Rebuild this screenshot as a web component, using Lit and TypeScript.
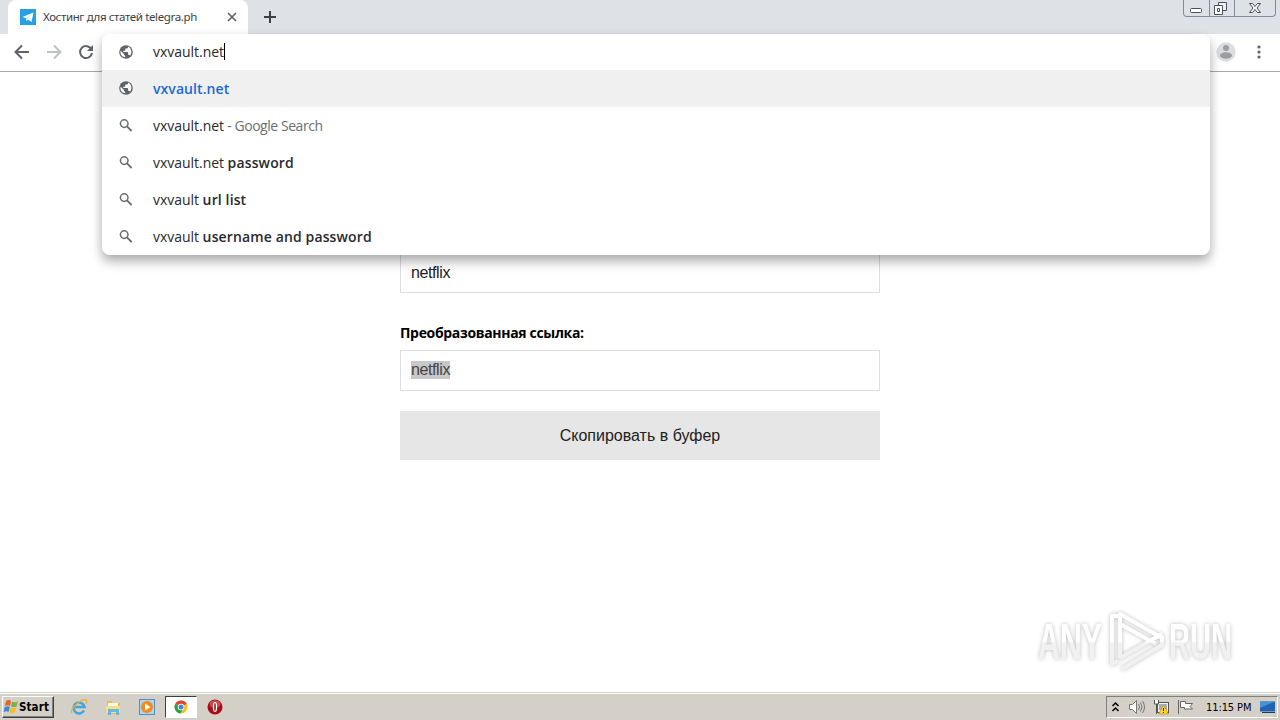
import { LitElement, html, css, svg } from 'lit';
import { customElement, property } from 'lit/decorators.js';

const SUGGESTIONS = [
  { typed: 'vxvault.net', note: ' - Google Search' },
  { typed: 'vxvault.net ', bold: 'password' },
  { typed: 'vxvault ', bold: 'url list' },
  { typed: 'vxvault ', bold: 'username and password' },
];

const globe = svg`
  <circle cx="8" cy="8" r="6.8" fill="#5f6368" />
  <path d="M7.2 13.3V12l-1.4-1.4v-.8L2.6 6.7c-.8 3.2 1.2 6.2 4.6 6.6z" fill="#fff" />
  <path d="M10 2.6v.6c0 .9-.6 1.4-1.4 1.4H7.3V6c0 .5-.4.8-.8.8H5.3v1.3h4c.5 0 .8.3.8.7v2h.7c.6 0 1.1.4 1.3.9 2.3-2.6 1.6-7.3-2.1-9.1z" fill="#fff" />
`;

const search = svg`
  <circle cx="6.2" cy="5.6" r="3.8" fill="none" stroke="#6a6e73" stroke-width="1.5" />
  <path d="M9 8.400L13.600 13" stroke="#6a6e73" stroke-width="1.8" />
`;

@customElement('app-root')
export class AppRoot extends LitElement {
  static styles = css`
    :host {
      display: flex;
      flex-direction: column;
      position: relative;
      width: 1280px;
      height: 720px;
      overflow: hidden;
      background: #fff;
      font-family: 'Open Sans', sans-serif;
    }
    browser-tabs {
      flex: 0 0 34px;
    }
    .toolbar {
      box-sizing: border-box;
      flex: 0 0 38px;
      display: flex;
      align-items: center;
      padding: 0 12px 2px 14px;
      border-bottom: 1px solid #a9a9a9;
    }
    .toolbar svg {
      margin-right: 16px;
    }
    .toolbar .avatar {
      margin: 0 14px 0 auto;
    }
    .toolbar .dots {
      margin: 0;
    }
    omnibox-popup {
      position: absolute;
      z-index: 2;
      left: 102px;
      top: 34px;
      width: 1108px;
    }
    .page {
      position: relative;
      flex: 1;
    }
    .form {
      width: 480px;
      margin: 0 auto;
      padding-top: 180px;
    }
    .field {
      box-sizing: border-box;
      height: 41px;
      padding: 11px 10px;
      border: 1px solid #ddd;
      color: #222;
      font: 16px/18px 'Liberation Sans', sans-serif;
      letter-spacing: -0.4px;
    }
    .field mark {
      display: block;
      width: max-content;
      height: 18px;
      margin-top: -1px;
      background: #c8c8c8;
      color: #444;
    }
    .label {
      margin: 30px 0 7px;
      font-size: 14px;
      line-height: 20px;
      font-weight: 700;
      letter-spacing: -0.33px;
    }
    .copy {
      display: block;
      width: 480px;
      height: 49px;
      margin-top: 20px;
      padding: 0;
      border: 0;
      background: #e6e6e6;
      color: #222;
      font: 16px 'Liberation Sans', sans-serif;
    }
    .watermark {
      position: absolute;
      left: 1030px;
      top: 530px;
      filter: drop-shadow(0 0 2px rgba(0, 0, 0, 0.26));
    }
    .watermark text {
      font: 700 50px 'Liberation Sans', sans-serif;
    }
    task-bar {
      flex: 0 0 28px;
    }
  `;

  render() {
    return html`
      <browser-tabs></browser-tabs>
      <div class="toolbar">
        <svg width="16" height="16" fill="none" stroke="#5f6368" stroke-width="2">
          <path d="M15 8H2M8 1.5L1.5 8L8 14.5" />
        </svg>
        <svg width="16" height="16" fill="none" stroke="#bdc1c6" stroke-width="2">
          <path d="M1 8H14M8 1.5L14.5 8L8 14.5" />
        </svg>
        <svg width="16" height="16" fill="none" stroke="#5f6368" stroke-width="2">
          <path d="M13.5 5.5A6 6 0 1 0 14 9" />
          <path d="M15 1V7H9z" fill="#5f6368" stroke="none" />
        </svg>
        <svg class="avatar" width="20" height="20">
          <circle cx="10" cy="10" r="9.7" fill="#dcdddf" />
          <circle cx="10" cy="6" r="3" fill="#9b9da0" />
          <ellipse cx="10" cy="13.5" rx="6" ry="3.2" fill="#9b9da0" />
        </svg>
        <svg class="dots" width="18" height="16" fill="#5f6368">
          <circle cx="9" cy="3" r="1.6" />
          <circle cx="9" cy="8" r="1.6" />
          <circle cx="9" cy="13" r="1.6" />
        </svg>
      </div>
      <omnibox-popup value="vxvault.net"></omnibox-popup>
      <div class="page">
        <div class="form">
          <div class="field">netflix</div>
          <div class="label">Преобразованная ссылка:</div>
          <div class="field"><mark>netflix</mark></div>
          <button class="copy">Скопировать в буфер</button>
        </div>
        <svg class="watermark" width="240" height="80">
          <defs>
            <linearGradient id="fade" gradientUnits="userSpaceOnUse" x1="0" y1="8" x2="0" y2="70">
              <stop offset="0.5" stop-color="#fff" />
              <stop offset="0.54" stop-color="#f1f1f1" />
            </linearGradient>
          </defs>
          <g fill="url(#fade)">
            <text x="8" y="57" textLength="64" lengthAdjust="spacingAndGlyphs">ANY</text>
            <text x="139" y="57" textLength="63" lengthAdjust="spacingAndGlyphs">RUN</text>
          </g>
          <g fill="none" stroke="url(#fade)" stroke-width="4" stroke-linejoin="round">
            <path d="M88 14h-6v48l6-3" />
            <path d="M90 56V12L132 36M90 46V22l36 20" />
            <path d="M90 56L132 32M92 67l40-24V34" />
          </g>
        </svg>
      </div>
      <task-bar></task-bar>
    `;
  }
}

@customElement('browser-tabs')
export class BrowserTabs extends LitElement {
  static styles = css`
    :host {
      display: flex;
      justify-content: space-between;
      background: #dee1e6;
    }
    .left {
      display: flex;
      align-items: center;
    }
    .tab {
      box-sizing: border-box;
      display: flex;
      align-items: center;
      width: 240px;
      height: 34px;
      margin-left: 8px;
      padding: 0 10px 0 12px;
      border-radius: 8px 8px 0 0;
      background: #fff;
    }
    .title {
      flex: 1;
      margin: -2px 0 0 7px;
      color: #3c4043;
      font: 11.5px 'Noto Sans', sans-serif;
      letter-spacing: -0.37px;
      white-space: nowrap;
    }
    .plus {
      margin-left: 15px;
    }
    .controls {
      display: flex;
      box-sizing: border-box;
      width: 93px;
      height: 17px;
      margin-right: 4px;
      border: 1px solid #858b96;
      border-top: 0;
      border-radius: 0 0 4px 4px;
    }
  `;

  render() {
    return html`
      <div class="left">
        <div class="tab">
          <svg width="16" height="16">
            <rect width="16" height="16" fill="#26a2e2" />
            <path d="M2.5 8L13.5 3.5L11.5 13L8 10.5L6.5 12L6 9.2z" fill="#fff" />
            <path d="M6 9.2L11 5.5L7 10z" fill="#b5dcf2" />
          </svg>
          <span class="title">Хостинг для статей telegra.ph</span>
          <svg width="12" height="12" stroke="#5f6368" stroke-width="1.7">
            <path d="M2 2L10 10M10 2L2 10" />
          </svg>
        </div>
        <svg class="plus" width="14" height="14" stroke="#3c4043" stroke-width="2">
          <path d="M7 1V13M1 7H13" />
        </svg>
      </div>
      <div class="controls">
        <svg width="91" height="16" fill="none" stroke="#4b505a">
          <path d="M25.5 0V16M50.5 0V16" stroke="#858b96" />
          <rect x="6.5" y="8.5" width="11" height="4" rx="1" fill="#fff" />
          <path d="M34.5 2.5h8v8h-8z" fill="#eef0f3" />
          <path d="M30.5 5.5h8v9h-8z" fill="#fff" />
          <path d="M33.5 8.5h2v3h-2z" />
          <path
            d="M65.500 3.500h3l2.500 3l2.500-3h3l-3.500 4.500l3.500 4.500h-3l-2.500-3l-2.500 3h-3l3.500-4.500z"
            fill="#fff"
          />
        </svg>
      </div>
    `;
  }
}

@customElement('omnibox-popup')
export class OmniboxPopup extends LitElement {
  @property() value = '';

  static styles = css`
    :host {
      display: block;
      height: 221px;
      overflow: hidden;
      border-radius: 8px;
      background: #fff;
      box-shadow: 0 6px 12px rgba(0, 0, 0, 0.34);
      font-size: 14px;
      color: #292a2d;
    }
    .row {
      display: flex;
      align-items: center;
      height: 37px;
      padding-left: 16px;
      letter-spacing: -0.03px;
      white-space: pre;
    }
    .input {
      box-sizing: border-box;
      height: 36px;
      padding-bottom: 1px;
    }
    .row svg {
      margin-right: 19px;
    }
    .caret {
      width: 1px;
      height: 17px;
      background: #000;
    }
    .selected {
      background: #f0f0f0;
      color: #1a6ad6;
      font-weight: 600;
      letter-spacing: 0.08px;
    }
    .selected svg {
      margin-bottom: 1px;
    }
    .note {
      color: #6b6f74;
      letter-spacing: -0.45px;
    }
    b {
      font-weight: 600;
      letter-spacing: 0.13px;
    }
  `;

  render() {
    return html`
      <div class="row input">
        <svg width="16" height="16">${globe}</svg>
        <span>${this.value}</span><span class="caret"></span>
      </div>
      <div class="row selected">
        <svg width="16" height="16">${globe}</svg>
        <span>${this.value}</span>
      </div>
      ${SUGGESTIONS.map(
        (s) => html`
          <div class="row">
            <svg width="16" height="16">${search}</svg>
            <span>${s.typed}<span class="note">${s.note}</span><b>${s.bold}</b></span>
          </div>
        `
      )}
    `;
  }
}

@customElement('task-bar')
export class TaskBar extends LitElement {
  static styles = css`
    :host {
      display: flex;
      box-sizing: border-box;
      align-items: center;
      padding: 3px 2px 2px 2px;
      border-top: 1px solid #d4d0c8;
      background: #d4d0c8;
      box-shadow: inset 0 1px #fff;
      font-family: 'DejaVu Sans Condensed', 'DejaVu Sans', sans-serif;
      color: #000;
    }
    .start {
      box-sizing: border-box;
      display: flex;
      align-items: center;
      width: 52px;
      height: 22px;
      border: 1px solid;
      border-color: #fff #404040 #404040 #fff;
      box-shadow: inset -1px -1px #808080;
      font-size: 11.5px;
      font-weight: 700;
      letter-spacing: 0.1px;
    }
    .launch {
      display: flex;
      align-items: center;
      margin-left: 8px;
    }
    .item {
      box-sizing: border-box;
      display: flex;
      align-items: center;
      justify-content: center;
      width: 34px;
      height: 22px;
    }
    .active {
      width: 32px;
      margin: 0 1px;
      border: 1px solid;
      border-color: #404040 #fff #fff #404040;
      background: #fff;
    }
    .tray {
      box-sizing: border-box;
      display: flex;
      align-items: center;
      width: 172px;
      height: 22px;
      margin-left: auto;
      padding-left: 4px;
      border: 1px solid;
      border-color: #808080 #fff #fff #808080;
    }
    .tray svg {
      flex: none;
      margin-right: 8px;
    }
    .tray .up {
      margin-right: 8px;
    }
    .clock {
      width: 46px;
      margin: 0 8px 0 4px;
      font-size: 11px;
      letter-spacing: -0.1px;
      white-space: nowrap;
    }
  `;

  render() {
    return html`
      <div class="start">
        <svg width="16" height="16">
          <path d="M3 2q3-2 5 0L7 7Q5 5.5 2 7z" fill="#e8622c" />
          <path d="M9 2.5q3 1.5 6 0L13.5 7.5q-3 1.5-5.5 0z" fill="#7bb342" />
          <path d="M1.8 8q3-1.5 5 0L5.5 13q-2-1.5-5 0z" fill="#348bd2" />
          <path d="M7.8 8.5q3 1.5 5.5 0L12 13.5q-3 1.5-5.5 0z" fill="#f6bd28" />
        </svg>
        <span>Start</span>
      </div>
      <div class="launch">
        <div class="item">
          <svg width="18" height="18" fill="none">
            <path d="M14 12.5A5.5 5.5 0 1 1 14.5 9H5" stroke="#46a5de" stroke-width="2.6" />
            <path d="M2 15C-1 11 13-1 16.5 2.500c.8 1 .2 2-.5 3" stroke="#e9b32e" stroke-width="1.3" />
          </svg>
        </div>
        <div class="item">
          <svg width="17" height="17">
            <path d="M2 2h5l1 2h7v11H2z" fill="#e3bd55" />
            <path d="M3 4h10v3H3z" fill="#fff9dc" />
            <path d="M1 7h14v7H1z" fill="#f5df8d" />
            <path d="M3 16v-6h11v6h-3v-3H6v3z" fill="#6fb4df" />
          </svg>
        </div>
        <div class="item">
          <svg width="18" height="18">
            <rect x="1.5" y="1.5" width="15" height="15" fill="#aed5ef" stroke="#4d91c6" />
            <circle cx="9" cy="9" r="6" fill="#f28a1c" />
            <path d="M7 5.5L12.5 9L7 12.5z" fill="#fff" />
          </svg>
        </div>
        <div class="item active">
          <svg width="16" height="16">
            <circle cx="8" cy="8" r="6.5" fill="#fbc116" />
            <path d="M8 8L2.4 4.7A6.5 6.5 0 0 1 13.6 4.7z" fill="#e34133" />
            <path d="M2.4 4.7A6.5 6.5 0 0 0 7.5 14.5L10.5 9L8 8z" fill="#2da04e" />
            <circle cx="8" cy="8" r="3.3" fill="#fff" />
            <circle cx="8" cy="8" r="2.5" fill="#4285e8" />
          </svg>
        </div>
        <div class="item">
          <svg width="16" height="16">
            <circle cx="8" cy="8" r="7.5" fill="#a80e15" />
            <ellipse cx="8" cy="5" rx="5.5" ry="3.8" fill="#cc4a4b" />
            <ellipse cx="8" cy="8" rx="2.2" ry="5" fill="#fff" />
            <ellipse cx="8" cy="8" rx=".8" ry="4" fill="#8d0b12" />
          </svg>
        </div>
      </div>
      <div class="tray">
        <svg class="up" width="9" height="12" fill="none" stroke="#000" stroke-width="1.5">
          <path d="M1.5 5L4.5 2L7.5 5M1.5 10L4.5 7L7.5 10" />
        </svg>
        <svg width="17" height="16" fill="none" stroke="#777">
          <path d="M1.5 5.5h3l4-4v13l-4-4h-3z" fill="#fff" />
          <path d="M10.5 5q2 3 0 6M12.5 3.5q3 4.5 0 9M14.5 2q4 6 0 12" />
        </svg>
        <svg width="16" height="16">
          <rect x="4.5" y="3.5" width="11" height="10" fill="#f3f3f3" stroke="#555" />
          <rect x="6" y="5" width="8" height="6" fill="#a3adb7" />
          <path d="M1.5 1v4h4V1M3.5 5v10" fill="#fff" stroke="#555" />
          <path d="M10.5 6L15.5 15H5.5z" fill="#ffd629" stroke="#b18b00" stroke-width=".6" />
          <path d="M10.5 9v3M10.5 13v1" stroke="#222" />
        </svg>
        <svg width="17" height="16" fill="#fff" stroke="#666">
          <path d="M1.5 1V15M3.5 2.5H8.5V4.5H15.5L13 7.5L15.5 10H7.5V8.500H3.5z" />
        </svg>
        <span class="clock">11:15 PM</span>
        <svg width="17" height="16">
          <path d="M1 2.5h15v10H1z" fill="#2364b2" />
          <path d="M1 2.5h15L1 9z" fill="#4a91d4" />
          <path d="M3 13.5h13" stroke="#1a3964" />
        </svg>
      </div>
    `;
  }
}
